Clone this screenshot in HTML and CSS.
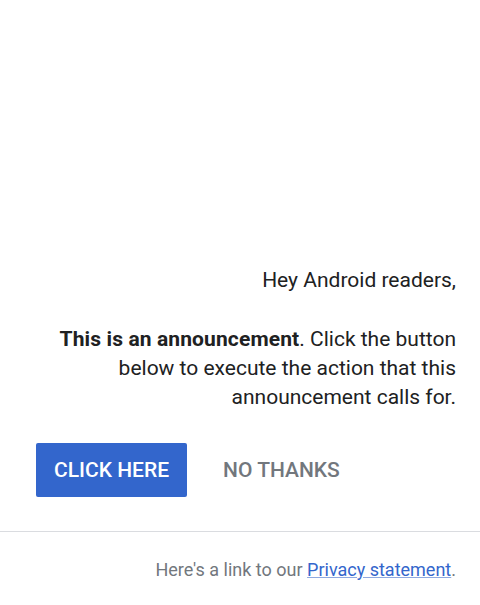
FILE: index.html
```html
<!DOCTYPE html>
<html>
<head>
<meta charset="utf-8">
<link rel="stylesheet" href="styles.css">
</head>
<body>
<div class="page">
  <div class="content">
    <p class="greeting">Hey Android readers,</p>
    <p class="message"><strong>This is an announcement</strong>. Click the button below to execute the action that this announcement calls for.</p>
    <div class="actions">
      <button class="btn btn-primary">CLICK HERE</button>
      <button class="btn btn-secondary">NO THANKS</button>
    </div>
  </div>
  <div class="footer">
    <p class="footnote">Here's a link to our <a href="#" class="link">Privacy statement</a>.</p>
  </div>
</div>
</body>
</html>
```
FILE: styles.css
```css
html, body {
  margin: 0;
  padding: 0;
  background: #ffffff;
}
body {
  font-family: Roboto, "Liberation Sans", sans-serif;
  color: #202122;
}
.page {
  min-height: 100vh;
  display: flex;
  flex-direction: column;
  justify-content: flex-end;
}
.content {
  padding: 0 24px 34px 36px;
  border-bottom: 1px solid #dadce0;
}
.greeting, .message {
  margin: 0;
  font-size: 21px;
  line-height: 29px;
  text-align: right;
}
.message {
  margin-top: 30px;
}
.message strong {
  font-weight: 700;
  letter-spacing: 0.12px;
}
.actions {
  display: flex;
  gap: 18px;
  margin-top: 31px;
}
.btn {
  font-family: Roboto, "Liberation Sans", sans-serif;
  font-size: 21px;
  font-weight: 500;
  height: 54px;
  padding: 0 18px;
  border: none;
  border-radius: 2px;
  cursor: pointer;
  letter-spacing: 0;
}
.btn-primary {
  background: #3366cc;
  color: #ffffff;
}
.btn-secondary {
  background: transparent;
  color: #72777d;
}
.footer {
  padding: 26px 24px 23px 24px;
}
.footnote {
  margin: 0;
  font-size: 18px;
  line-height: 24px;
  text-align: right;
  color: #72777d;
}
.link {
  color: #3366cc;
  text-decoration: underline;
  text-decoration-color: #8fa9e0;
}
```
